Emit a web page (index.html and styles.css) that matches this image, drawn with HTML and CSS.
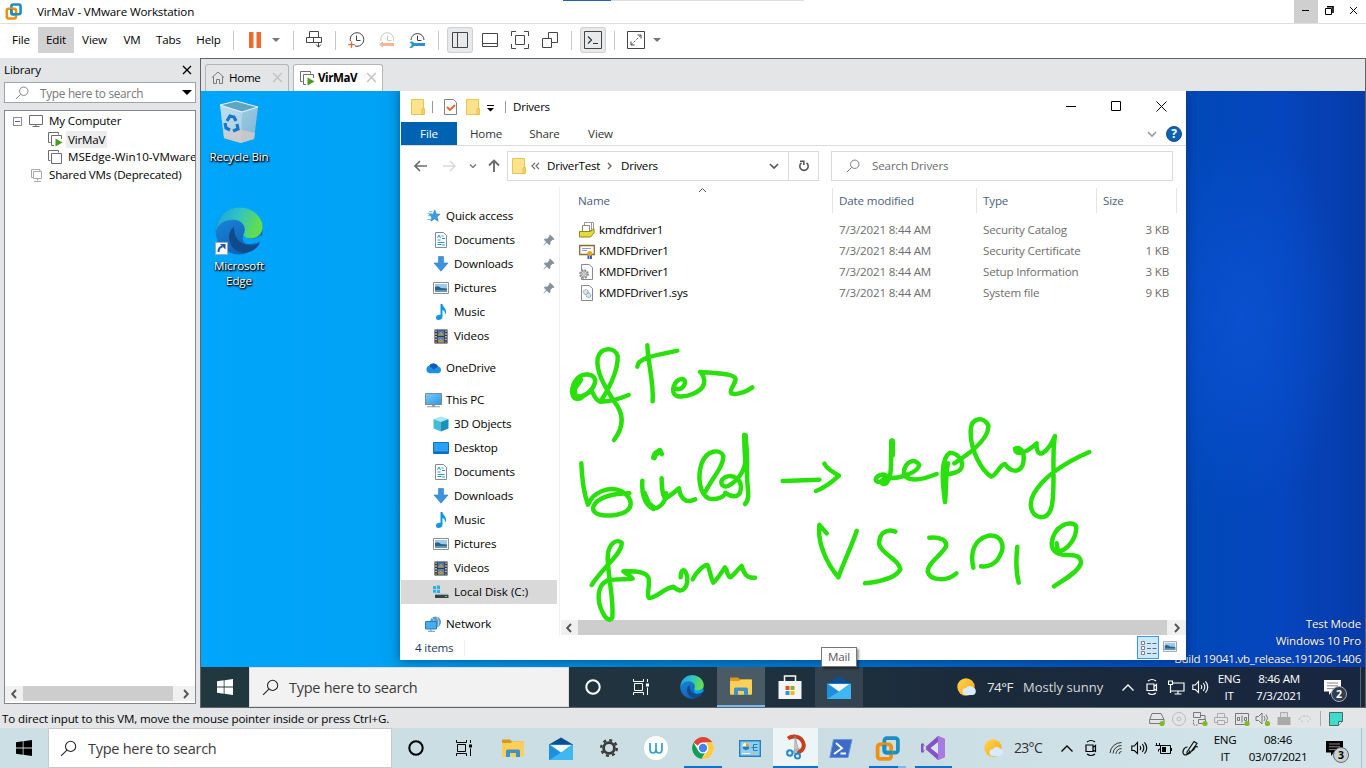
FILE: index.html
```html
<!DOCTYPE html>
<html lang="en">
<head>
<meta charset="utf-8">
<title>VirMaV - VMware Workstation</title>
<link rel="stylesheet" href="styles.css">
</head>
<body>
<svg class="defs" width="0" height="0">
  <defs>
    <linearGradient id="gEdgeA" x1="0" y1="0" x2="1" y2="0.3"><stop offset="0" stop-color="#1b9de2"/><stop offset=".5" stop-color="#2fc3c4"/><stop offset="1" stop-color="#63dd4e"/></linearGradient>
    <linearGradient id="gEdgeB" x1="0" y1="0" x2="0.6" y2="1"><stop offset="0" stop-color="#1b8fdf"/><stop offset="1" stop-color="#0f5db5"/></linearGradient>
    <linearGradient id="gBin" x1="0" y1="0" x2="1" y2="1"><stop offset="0" stop-color="#b9dcee"/><stop offset="1" stop-color="#8fb6cb"/></linearGradient>
    <linearGradient id="gScreen" x1="0" y1="0" x2="1" y2="1"><stop offset="0" stop-color="#7ccbf7"/><stop offset="1" stop-color="#2a97e3"/></linearGradient>
    <linearGradient id="gSun" x1="0" y1="0" x2="1" y2="1"><stop offset="0" stop-color="#ffd84a"/><stop offset="1" stop-color="#f9a01e"/></linearGradient>
  </defs>
  <symbol id="vmware" viewBox="0 0 24 24"><rect x="9" y="2" width="13" height="14" rx="2.5" fill="none" stroke="#1a8fc4" stroke-width="3.6"/><rect x="2.5" y="8" width="13" height="14" rx="2.5" fill="none" stroke="#f0900f" stroke-width="3.6"/><path d="M9 8.5V14q0 2 2 2h6" fill="none" stroke="#1a8fc4" stroke-width="3.6"/></symbol>
  <symbol id="folder" viewBox="0 0 14 16"><path d="M.5.5h12v15H.5z" fill="#ffe28c" stroke="#e8c452"/><path d="M11 10v5.500h2.500V9.500z" fill="#f7d467" stroke="#dbb53e" stroke-width=".7"/></symbol>
  <symbol id="mag" viewBox="0 0 16 16"><circle cx="10" cy="6" r="4.800" fill="none" stroke="currentColor"/><path d="M6.500 9.500L1 15" stroke="currentColor" fill="none"/></symbol>
  <symbol id="vm" viewBox="0 0 16 16"><path d="M3.500 11.500h-2v-10h10v2M4.500 4.500h10v10h-10z" fill="none" stroke="#6c6c6c"/></symbol>
  <symbol id="vmrun" viewBox="0 0 16 16"><path d="M3.500 11.500h-2v-10h10v2M7 14.500H4.500v-10h10V8" fill="none" stroke="#6c6c6c"/><path d="M8.500 7.500l7 4-7 4z" fill="#4a9a1c"/></symbol>
  <symbol id="monitor" viewBox="0 0 16 14"><path d="M1.500 1.500h13v9h-13zM7.800 10.500v2M4.500 12.500h7" fill="none" stroke="#6c6c6c"/></symbol>
  <symbol id="shared" viewBox="0 0 14 14"><path d="M3 9.500H1.500v-8H10V3M3.500 3.500h8v7h-8zM7.500 10.500v2M4 13.500h7" fill="none" stroke="#a8a8a8"/></symbol>
  <symbol id="x" viewBox="0 0 10 10"><path d="M1 1l8 8M9 1L1 9" fill="none" stroke="currentColor" stroke-width="1.300"/></symbol>
  <symbol id="left" viewBox="0 0 8 10"><path d="M6 1L2.200 5 6 9" fill="none" stroke="currentColor" stroke-width="1.900"/></symbol>
  <symbol id="right" viewBox="0 0 8 10"><path d="M2 1l3.800 4L2 9" fill="none" stroke="currentColor" stroke-width="1.900"/></symbol>
  <symbol id="down" viewBox="0 0 10 8"><path d="M1 2l4 4 4-4" fill="none" stroke="currentColor" stroke-width="1.600"/></symbol>
  <symbol id="up" viewBox="0 0 14 9"><path d="M1.500 7.500L7 2l5.500 5.500" fill="none" stroke="currentColor" stroke-width="1.300"/></symbol>
  <symbol id="star" viewBox="0 0 16 16"><path d="M9.500 1l1.700 4.600 4.300.4-3.400 3 1.300 5-4.200-2.700L5 14l1-4.700-3-2.900 4.300-.4z" fill="#3c9be3" stroke="#2179c2" stroke-width=".6"/><path d="M1 5h5M2 7.500h3M1 12h4M3 3h4" stroke="#5bb2ee"/></symbol>
  <symbol id="doc" viewBox="0 0 14 16"><path d="M1.500.5h8l3 3v12h-11z" fill="#fff" stroke="#7f8c92"/><path d="M3.500 6l1.500-3 1.500 3M7.500 4h2M3.500 8h3M8 6.500h3M3.500 10.500h7M3.500 12.500h4M8 13h3" stroke="#2d97c9" fill="none"/></symbol>
  <symbol id="dl" viewBox="0 0 16 16"><path d="M5.500.5h5V7h4.500L8 15.200 1 7h4.500z" fill="#3a93de" stroke="#2c7cc3" stroke-width=".6"/></symbol>
  <symbol id="pic" viewBox="0 0 16 12"><path d="M.5.5h15v11H.5z" fill="#fff" stroke="#909090"/><path d="M2 2h12v8H2z" fill="#9ccbf0"/><path d="M2 5q3-2 6 1l6 .5V10H2z" fill="#2d6484"/><path d="M2 8h12v2H2z" fill="#6296bd"/></symbol>
  <symbol id="music" viewBox="0 0 12 16"><path d="M5.500 0h2c0 3 4 4 3.500 8.500-.2 1-.8 2-1.200 2.300C10.500 7.500 9 6.500 7.500 6v7c0 2-2 3-4 3S.5 14.500 1 13s2.500-2.500 4.500-2z" fill="#1296e8"/></symbol>
  <symbol id="video" viewBox="0 0 14 16"><path d="M0 .5h14v15H0z" fill="#36383e"/><path d="M3.500 1.500h7v6h-7z" fill="#4279c2"/><path d="M3.500 8.500h7v6h-7z" fill="#4c86cf"/><path d="M4 6l3-3 3 3v1H4zM4 12l3-2 3 3v1.500H4z" fill="#b8953c"/><path d="M1.700 1.500v13M12.300 1.500v13" stroke="#eee" stroke-width="1.400" stroke-dasharray="1.500 1.500"/></symbol>
  <symbol id="cloud" viewBox="0 0 18 12"><path d="M5 11.500a4 4 0 0 1-.6-7.800A5.500 5.500 0 0 1 14 4.500a3.600 3.600 0 0 1 .5 7z" fill="#1d8fe0"/><path d="M4.400 3.700A5.500 5.500 0 0 1 14 4.500L9 7.500z" fill="#0b5fb8"/></symbol>
  <symbol id="pc" viewBox="0 0 17 15"><path d="M.5.5h16v11H.5z" fill="url(#gScreen)" stroke="#7b8b95"/><path d="M7 12h3v1.500H7zM2 13.300h13v1H2z" fill="#8fa0aa"/></symbol>
  <symbol id="cube" viewBox="0 0 16 16"><path d="M8 .5l7.500 2.500-7.500 3L.5 3z" fill="#a8e6f1"/><path d="M.5 3L8 6v9.500l-7.500-3z" fill="#45bdd5"/><path d="M15.500 3L8 6v9.500l7.500-3z" fill="#1a91b8"/></symbol>
  <symbol id="desk" viewBox="0 0 16 12"><path d="M.5.5h15v11H.5z" fill="#27a0f5" stroke="#1270bd"/><path d="M1 9.500h14V11H1z" fill="#0d6ab5"/></symbol>
  <symbol id="disk" viewBox="0 0 16 14"><path d="M0 1h3v3H0zM3.800.6H7V4H3.800zM0 4.700h3v3H0zM3.800 4.700H7V8H3.800z" fill="#25b4e4"/><path d="M3 8.500h11l1.500 1.500h-13.500z" fill="#bfc3c6"/><path d="M2 9.800h13.500V13H2z" fill="#3c4043"/><path d="M12 11h2v1h-2z" fill="#51e04d"/></symbol>
  <symbol id="net" viewBox="0 0 17 16"><circle cx="10.500" cy="6" r="5.500" fill="#5f9dc4"/><path d="M7 2q4 3 1 6M12 1q3 4 1 9" stroke="#b5d7ea" fill="none"/><path d="M.5 5.500h11v7.500H.5z" fill="#45aef0" stroke="#2a7cb8"/><path d="M3 15.300h7M6 13v2" stroke="#78909c"/></symbol>
  <symbol id="pin" viewBox="0 0 12 12"><path d="M7 .5L11.500 5l-1 .9-1-.2L7.300 7.900l.2 2.100-1.200 1.200L3.900 8.800.8 11.600.4 11.200 3.200 8.100.8 5.700 2 4.500l2.100.2L6.300 2.500 6.100 1.500z" fill="#84909a"/></symbol>
  <symbol id="start" viewBox="0 0 16 16"><path d="M0 2.300L6.700 1.300V7.600H0zM7.500 1.200L16 0v7.600H7.500zM0 8.400h6.700v6.300L0 13.700zM7.500 8.400H16V16l-8.500-1.200z" fill="currentColor"/></symbol>
  <symbol id="cortana" viewBox="0 0 18 18"><circle cx="9" cy="9" r="6.700" fill="none" stroke="currentColor" stroke-width="2"/></symbol>
  <symbol id="taskview" viewBox="0 0 16 16"><path d="M.5 0v2.500h10V0M1.500 4.500h8v7h-8zM.5 16v-2.500h10V16M14.500 0v3M14.500 8.500V16" fill="none" stroke="currentColor"/><path d="M13 4.500h3v3h-3z" fill="currentColor"/></symbol>
  <symbol id="edge" viewBox="0 0 48 48"><circle cx="24" cy="24" r="23.500" fill="url(#gEdgeB)"/><path d="M1 24C2 9 13 0 25 .5 39 1 48 11 47.500 21c-.5 8-8 11-14 10.500-4-.5-6.500-2-5-4C32 21 28 14.500 21 13 12 11.500 3 16 1 24z" fill="url(#gEdgeA)"/><path d="M19 20c-5 3-6 10-4 16 3 7 10 11 18 9 6-1 10-5 12-9-8 4-17 3-22-3-3-4-4-8-4-13z" fill="#114a8b"/><path class="bite" d="M34 31.500q6 1 12-3.500 2 2 .5 5.500-8 5-16 3-4-2-2-9 1 3 5.500 4z"/></symbol>
  <symbol id="explorer" viewBox="0 0 22 18"><path d="M0 1.500Q0 .5 1 .5h7l2 2h12V6H0z" fill="#d99a1b"/><path d="M0 4h9l1.500-1.500H21q1 0 1 1V17q0 .8-1 .8H1q-1 0-1-1z" fill="#fccf57"/><path d="M4 18v-6q0-1.500 1.500-1.500h11q1.500 0 1.500 1.500v6h-4v-4H8v4z" fill="#3e92c8"/></symbol>
  <symbol id="store" viewBox="0 0 24 24"><path d="M6.500 7V1h11v6" fill="none" stroke="#fff" stroke-width="1.500"/><path d="M.5 6h23v18H.5z" fill="#f4f4f4"/><path d="M7.500 11h4v4h-4z" fill="#e8501f"/><path d="M12.500 11h4v4h-4z" fill="#7db82b"/><path d="M7.500 16h4v4h-4z" fill="#219bd9"/><path d="M12.500 16h4v4h-4z" fill="#f9b912"/></symbol>
  <symbol id="mail" viewBox="0 0 24 23"><path d="M0 7.500L12 .5l12 7V11H0z" fill="#0c4f97"/><path d="M0 7.500V23h24V7.500z" fill="#28a5e8"/><path d="M0 23V8l24 15z" fill="#1d8fdc"/><path d="M24 23V8L0 23z" fill="#3fb8f1"/><path d="M1.500 8h21L12 15.500z" fill="#f5f8fb"/></symbol>
  <symbol id="weather" viewBox="0 0 20 19"><circle cx="9" cy="9" r="8.700" fill="url(#gSun)"/><path d="M9 17a3.500 3.500 0 0 1 0-7 4.500 4.500 0 0 1 7-.5 3.900 3.900 0 0 1 0 7.500z" fill="#d7ebfb"/></symbol>
  <symbol id="meet" viewBox="0 0 16 18"><path d="M4 3q4-3 8 0M4 15q4 3 8 0M3 6h7v6.500H3zM10 8.500l2.500-2v6L10 11" fill="none" stroke="currentColor" stroke-width="1.200"/></symbol>
  <symbol id="lan" viewBox="0 0 17 15"><path d="M5 3h11v8H3M10 11v3M6.500 14h7M.5 1h4v3.500h-4zM2.500 4.500V13" fill="none" stroke="currentColor" stroke-width="1.200"/></symbol>
  <symbol id="speaker" viewBox="0 0 17 14"><path d="M.8 5h2.500L6.500 1.500v11L3.300 9.500H.8zM9 5q1.500 2 0 4M11.300 3q3 4 0 8M13.500 1.300q4.500 5.700 0 11.400" fill="none" stroke="currentColor" stroke-width="1.100"/></symbol>
  <symbol id="note" viewBox="0 0 17 15"><path d="M0 0h17v11.500H8L5 15v-3.500H0z" fill="currentColor"/><path d="M3 3h11M3 5.800h11M3 8.600h7" class="cut"/></symbol>
</svg>

<header class="titlebar">
  <svg class="logo" width="17" height="17"><use href="#vmware"/></svg>
  <span class="wintitle">VirMaV - VMware Workstation</span>
  <div class="notch"></div>
  <div class="winbtns">
    <span class="wb min"><svg width="8" height="10"><path d="M0 4.500h7" stroke="#000"/></svg></span>
    <span class="wb"><svg width="9" height="9"><path d="M.5 2.500h6v6h-6z" fill="none" stroke="#000"/><path d="M2 .8h6V7" fill="none" stroke="#000" stroke-width="1.600"/></svg></span>
    <span class="wb"><svg width="9" height="9"><path d="M1 1l7 7M8 1L1 8" stroke="#000"/></svg></span>
  </div>
</header>

<nav class="menubar">
  <span class="mi m1">File</span><span class="mi m2">Edit</span><span class="mi m3">View</span><span class="mi m4">VM</span><span class="mi m5">Tabs</span><span class="mi m6">Help</span>
  <i class="sep s1"></i>
  <span class="tb"><svg width="12" height="16"><path d="M0 0h4.500v16H0zM7.500 0H12v16H7.500z" fill="#ec6a2c"/></svg></span>
  <i class="caret"></i>
  <i class="sep s2"></i>
  <span class="tb"><svg width="16" height="18"><path d="M3.500.5h9v6h-9zM.5 6.500h7v5h-7zM7.500 6.500h8v5h-8zM12.500 11v5M10 13.500l2.500 2.700 2.500-2.700" fill="none" stroke="#444"/></svg></span>
  <i class="sep s3"></i>
  <span class="tb"><svg width="16" height="16"><circle cx="9" cy="7.500" r="6.800" fill="none" stroke="#444"/><path d="M8.500 3.500v5h4" fill="none" stroke="#444"/><path d="M0 9h7v8H0z" fill="#fff"/><path d="M3.500 9.500V16M.3 12.700h6.500" stroke="#ec6a2c" stroke-width="1.300"/></svg></span>
  <span class="tb g5"><svg width="16" height="16"><path d="M2 9A6.500 6.500 0 1 1 14.500 9M8.500 3.500v5h4" fill="none" stroke="#c8c8c8"/><path d="M0 12.500l4-3V11h11v3H4v1.500z" fill="#f6b593"/></svg></span>
  <span class="tb g4"><svg width="16" height="16"><path d="M2 8A6.500 6.500 0 1 1 15 8M8.500 3.500v5h4" fill="none" stroke="#444"/><path d="M5 11h11v3H5c-1 2-3 2.500-5 1.500l2.500-1.500v-2L.5 10c2-1 4-.5 4.500 1z" fill="#2b92d0"/></svg></span>
  <i class="sep s4"></i>
  <span class="tb on"><svg width="16" height="16"><path d="M.5.5h15v15H.5zM5.500.5v15" fill="none" stroke="#444"/></svg></span>
  <span class="tb g4"><svg width="16" height="16"><path d="M.5 1.500h15v13H.5zM.5 11.500h15" fill="none" stroke="#444"/></svg></span>
  <span class="tb g4"><svg width="18" height="18"><path d="M4.500 4.500h9v9h-9zM.5 5V.5H5M13 .5h4.500V5M17.500 13v4.500H13M5 17.500H.5V13" fill="none" stroke="#444"/></svg></span>
  <span class="tb g4"><svg width="16" height="16"><path d="M.5 6.500h9v9h-9zM6.500 6V.5h9v10H10" fill="none" stroke="#444"/></svg></span>
  <i class="sep s4"></i>
  <span class="tb on"><svg width="18" height="18"><path d="M.5.5h17v17H.5z" fill="none" stroke="#444"/><path d="M4 5.500L7.500 9 4 12.500M9 12.500h5" fill="none" stroke="#333" stroke-width="1.200"/></svg></span>
  <i class="sep s4"></i>
  <span class="tb"><svg width="18" height="18"><path d="M.5.5h17v17H.5z" fill="none" stroke="#444"/><path d="M10.500 4h3.500v3.500M4 10.500V14h3.500" fill="none" stroke="#444"/><path d="M14 4L4 14" stroke="#555" stroke-dasharray="2.500 1.500"/></svg></span>
  <i class="caret"></i>
</nav>

<main class="main">
  <aside class="library">
    <div class="libhead"><span>Library</span><svg width="10" height="10"><use href="#x"/></svg></div>
    <div class="libsearch"><svg width="14" height="14"><use href="#mag"/></svg><span class="ph">Type here to search</span><i class="bigcaret"></i></div>
    <div class="tree">
      <div class="tr r1"><i class="minus"></i><svg width="16" height="14"><use href="#monitor"/></svg><span>My Computer</span></div>
      <div class="tr r2"><svg width="16" height="16"><use href="#vmrun"/></svg><span class="sel">VirMaV</span></div>
      <div class="tr r2"><svg width="16" height="16"><use href="#vm"/></svg><span class="long">MSEdge-Win10-VMware</span></div>
      <div class="tr r3"><svg width="14" height="14"><use href="#shared"/></svg><span class="dep">Shared VMs (Deprecated)</span></div>
      <div class="hbar lib"><svg width="8" height="10"><use href="#left"/></svg><i class="thumb"></i><svg width="8" height="10"><use href="#right"/></svg></div>
    </div>
  </aside>

  <section class="vmpane">
    <div class="tabs">
      <div class="tab home"><svg width="14" height="13"><path d="M1 6.500L7 1l6 5.500M2.500 5.500v7h3V8.500h3v4h3v-7" fill="none" stroke="#7b7b7b"/></svg><span>Home</span><svg class="cx" width="11" height="11"><use href="#x"/></svg></div>
      <div class="tab act"><svg width="16" height="16"><use href="#vmrun"/></svg><span>VirMaV</span><svg class="cx" width="11" height="11"><use href="#x"/></svg></div>
    </div>
    <div class="screen">
      <div class="dicon bin">
        <svg width="40" height="44" viewBox="0 0 40 44"><path d="M1 5L17 1l22 6-4 32-13 4-17-5z" fill="url(#gBin)" opacity=".9"/><path d="M1 5L17 1l22 6-16 5z" fill="#5fa5c4"/><path d="M1 5l22 7-1 31-17-5z" fill="#cfe6f2" opacity=".5"/><path d="M5 34l14-5 17 4-1 6-13 4-17-5z" fill="#d3cbc8" opacity=".8"/><path d="M1 5L17 1l22 6-16 5z" fill="none" stroke="#e9f5fa"/><path d="M8 21l3-5 4 1 2 4M18 24l1 5-5 2M11 30l-4-2-1-5" fill="none" stroke="#1975c5" stroke-width="3.200"/></svg>
        <span>Recycle Bin</span>
      </div>
      <div class="dicon edge">
        <svg width="48" height="48"><use href="#edge"/><path d="M.5 35.500h12v12H.5z" fill="#f6f9fc" stroke="#9ab"/><path d="M3.500 45q0-5 4-5.500" fill="none" stroke="#24549b" stroke-width="2"/><path d="M5 37h5.500v5.500z" fill="#24549b"/></svg>
        <span>Microsoft<br>Edge</span>
      </div>
      <div class="mark"><span class="k1">Test Mode</span><span class="k2">Windows 10 Pro</span><span class="k3">Build 19041.vb_release.191206-1406</span></div>

      <div class="window">
        <div class="wtitle">
          <svg width="14" height="16"><use href="#folder"/></svg><i class="vb v1"></i>
          <svg class="chk" width="13" height="16"><path d="M.5.500h9l3 3v12H.5z" fill="#fff" stroke="#7d8486"/><path d="M3 8l3 3 5-5" fill="none" stroke="#e4622b" stroke-width="1.800"/></svg>
          <svg class="f2" width="14" height="16"><use href="#folder"/></svg>
          <svg class="qat" width="7" height="8"><path d="M0 1.500h7" stroke="#000"/><path d="M0 4h7L3.500 7.500z"/></svg>
          <i class="vb v2"></i><span class="wname">Drivers</span>
          <div class="wctl"><svg width="10" height="10"><path d="M0 5.500h10" stroke="#000"/></svg><svg width="10" height="10"><path d="M.5.500h9v9h-9z" fill="none" stroke="#000"/></svg><svg width="11" height="11"><path d="M.5.500l10 10M10.500.5l-10 10" stroke="#000"/></svg></div>
        </div>
        <div class="ribbon"><span class="file">File</span><span class="rt a">Home</span><span class="rt b">Share</span><span class="rt c">View</span>
          <svg class="rd" width="10" height="8"><use href="#down"/></svg><b class="help">?</b></div>
        <div class="addr">
          <svg class="back" width="13" height="12"><path d="M13 6H1M6 1L1 6l5 5" fill="none" stroke="#6b6b6b" stroke-width="1.700"/></svg>
          <svg class="fwd" width="13" height="12"><path d="M0 6h12M7 1l5 5-5 5" fill="none" stroke="#dadada" stroke-width="1.700"/></svg>
          <svg class="rec" width="8" height="6"><use href="#down"/></svg>
          <svg class="upa" width="12" height="13"><path d="M6 13V1M1 6.500L6 1.500l5 5" fill="none" stroke="#6b6b6b" stroke-width="1.900"/></svg>
          <div class="path"><svg width="14" height="16"><use href="#folder"/></svg><svg class="dbl" width="9" height="8"><path d="M4 .800L1 4l3 3.200M8 .800L5 4l3 3.200" fill="none" stroke="#666" stroke-width="1.200"/></svg><span class="p1">DriverTest</span><svg class="gt" width="6" height="8"><path d="M1 1l3 3-3 3" fill="none" stroke="#666" stroke-width="1.400"/></svg><span class="p2">Drivers</span><svg class="pd" width="10" height="8"><use href="#down"/></svg></div>
          <div class="refresh"><svg width="12" height="12"><path d="M3.500 2.800A4.200 4.200 0 1 0 8.500 2.800M2 1.200h3.800V5" fill="none" stroke="#555" stroke-width="1.600"/></svg></div>
          <div class="wsearch"><svg width="14" height="14"><use href="#mag"/></svg><span>Search Drivers</span></div>
        </div>
        <div class="body">
          <div class="navp">
            <div class="n top"><svg width="14" height="14"><use href="#star"/></svg><span>Quick access</span></div>
            <div class="n"><svg width="16" height="16"><use href="#doc"/></svg><span>Documents</span><svg class="pin" width="12" height="12"><use href="#pin"/></svg></div>
            <div class="n"><svg width="16" height="16"><use href="#dl"/></svg><span>Downloads</span><svg class="pin" width="12" height="12"><use href="#pin"/></svg></div>
            <div class="n"><svg width="16" height="12"><use href="#pic"/></svg><span>Pictures</span><svg class="pin" width="12" height="12"><use href="#pin"/></svg></div>
            <div class="n"><svg width="16" height="16"><use href="#music"/></svg><span>Music</span></div>
            <div class="n"><svg width="16" height="15"><use href="#video"/></svg><span>Videos</span></div>
            <div class="n top gap"><svg width="16" height="12"><use href="#cloud"/></svg><span>OneDrive</span></div>
            <div class="n top gap"><svg width="17" height="15"><use href="#pc"/></svg><span>This PC</span></div>
            <div class="n"><svg width="16" height="16"><use href="#cube"/></svg><span>3D Objects</span></div>
            <div class="n"><svg width="16" height="12"><use href="#desk"/></svg><span>Desktop</span></div>
            <div class="n"><svg width="16" height="16"><use href="#doc"/></svg><span>Documents</span></div>
            <div class="n"><svg width="16" height="16"><use href="#dl"/></svg><span>Downloads</span></div>
            <div class="n"><svg width="16" height="16"><use href="#music"/></svg><span>Music</span></div>
            <div class="n"><svg width="16" height="12"><use href="#pic"/></svg><span>Pictures</span></div>
            <div class="n"><svg width="16" height="15"><use href="#video"/></svg><span>Videos</span></div>
            <div class="n cur"><svg width="16" height="14"><use href="#disk"/></svg><span class="ld">Local Disk (C:)</span></div>
            <div class="n top gap"><svg width="17" height="16"><use href="#net"/></svg><span>Network</span></div>
          </div>
          <div class="files">
            <div class="cols"><span>Name</span><span>Date modified</span><span>Type</span><span>Size</span><svg class="sort" width="9" height="6"><path d="M1 5l3.500-3.500L8 5" fill="none" stroke="#555"/></svg></div>
            <div class="row"><svg width="16" height="16"><path d="M5.500.5h7v8h-7zM8.500.5h6v8" fill="#fff" stroke="#999"/><path d="M3.500 3.500h7v7h-7z" fill="#fff" stroke="#888"/><path d="M.5 9.500h11l3.500-3V11l-3.500 4H.5z" fill="#e6da3c" stroke="#8f871d"/></svg><span>kmdfdriver1</span><span>7/3/2021 8:44 AM</span><span>Security Catalog</span><span class="sz">3 KB</span></div>
            <div class="row"><svg width="16" height="16"><path d="M.7 2.500h14.600v9H.7z" fill="#fff" stroke="#8a6a38" stroke-width="1.300"/><path d="M3 5.500h9M3 7.500h5" stroke="#8ea2c8"/><path d="M8.500 12h2v4h-2zM11 12h2v4h-2z" fill="#2d62b5"/><circle cx="10.800" cy="10.500" r="2.500" fill="#f0a21b"/></svg><span>KMDFDriver1</span><span>7/3/2021 8:44 AM</span><span>Security Certificate</span><span class="sz">1 KB</span></div>
            <div class="row"><svg width="16" height="16"><path d="M2.500.5H10l3.500 3v12h-11z" fill="#fff" stroke="#888"/><circle cx="5" cy="10" r="4" fill="#e2e2e2" stroke="#888" stroke-width="1.700" stroke-dasharray="1.800 1.340"/><circle cx="5" cy="10" r="3" fill="#ddd" stroke="#888" stroke-width=".7"/><circle cx="5" cy="10" r="1.300" fill="#fff" stroke="#888" stroke-width=".7"/></svg><span>KMDFDriver1</span><span>7/3/2021 8:44 AM</span><span>Setup Information</span><span class="sz">3 KB</span></div>
            <div class="row"><svg width="16" height="16"><path d="M2.500.5H10l3.500 3v12h-11z" fill="#fff" stroke="#888"/><circle cx="6.800" cy="7" r="2.500" fill="#d5e4ec" stroke="#8a969e" stroke-dasharray="1.500 .6"/><circle cx="9.500" cy="10.300" r="2.300" fill="#d5e9f2" stroke="#7297ab" stroke-dasharray="1.500 .6"/></svg><span>KMDFDriver1.sys</span><span>7/3/2021 8:44 AM</span><span>System file</span><span class="sz">9 KB</span></div>
            <div class="hbar win"><svg width="8" height="10"><use href="#left"/></svg><i class="thumb"></i><svg width="8" height="10"><use href="#right"/></svg></div>
          </div>
        </div>
        <div class="wstatus"><span>4 items</span><i class="vline"></i>
          <div class="vbtn"><svg width="17" height="14"><path d="M1.500.5h3v3h-3zM1.500 5.500h3v3h-3zM1.500 10.500h3v3h-3z" fill="#fff" stroke="#8a7d78"/><path d="M7 2.500h4M12.500 2.500h4M7 7.500h4M12.500 7.500h4M7 12.500h4M12.500 12.500h4" stroke="#6b6b6b"/></svg></div>
          <svg class="v2b" width="14" height="11"><use href="#pic"/></svg></div>

        <svg class="ink" width="560" height="300" viewBox="560 330 560 300">
          <g transform="translate(560 330) scale(.33333)">
            <path d="M62 148C45 158 35 182 47 200C75 203 104 178 106 150C98 126 60 128 44 156C32 180 34 205 52 207C70 203 85 185 96 184C104 203 112 214 122 214C138 190 176 125 173 78C165 50 122 50 113 85C107 125 135 170 162 214C188 245 196 285 162 330M120 215C150 215 180 206 206 195"/>
            <path class="thick" d="M60 150L42 176L44 200L60 203"/>
            <path d="M262 46C264 100 282 160 278 214M232 110C234 82 290 76 352 62M344 174C365 190 388 150 366 147C340 150 330 190 350 198C380 205 425 185 432 162C436 145 426 130 420 126C470 130 525 130 527 148C525 165 506 180 514 190C530 195 555 188 577 172"/>
            <path d="M64 400C66 450 75 500 84 524C98 486 150 466 185 484C224 508 222 545 170 554C125 562 95 552 100 530C110 502 160 490 208 490M247 452C244 490 255 520 270 530C290 545 318 520 318 490M305 445C305 480 310 505 318 504C335 495 348 482 357 475C360 500 375 524 406 508"/>
            <path class="thick" d="M282 382L286 372L299 363M252 490L264 520L280 534"/>
            <path d="M298 362L306 372M436 485C460 440 490 410 490 378C480 355 440 360 425 400C412 440 418 490 445 505C470 512 495 500 496 488C510 500 538 508 542 480C548 450 520 430 495 442C475 455 485 475 504 468C530 455 555 425 556 390L553 314C562 350 562 390 561 430C560 470 573 505 555 522"/>
            <path class="thick" d="M555 318L558 395"/>
            <path d="M668 453L778 449M793 401C800 416 815 425 837 437C815 457 790 475 768 483"/>
            <path d="M95 765C130 710 188 670 185 638C170 625 144 640 143 682C145 750 162 810 157 862C150 875 138 868 129 850C108 810 112 765 142 752C170 745 200 750 218 746C212 737 200 732 190 724C230 722 260 725 266 745C270 775 258 795 267 804C290 805 310 775 340 770C362 792 382 780 382 745C378 714 362 712 362 742M398 748C408 728 430 705 442 705C450 720 452 745 460 758C475 745 485 725 495 712C505 725 500 740 512 742C525 732 535 715 545 708C552 730 560 747 585 743"/>
          </g>
          <g transform="translate(770 400) scale(.33333)">
            <path d="M350 230C342 216 315 228 318 242C325 252 350 240 340 228M366 122C358 175 372 225 348 250C335 258 325 242 352 232C390 240 445 215 448 195C435 172 405 185 402 215C405 250 455 240 500 222"/>
            <path class="thick" d="M366 124V165"/>
            <path d="M525 306C516 240 512 175 540 158C575 160 590 205 560 216L540 222M534 190C526 220 530 260 525 306M553 190C600 160 658 115 655 76C640 48 603 52 602 92C600 150 635 212 664 230C682 224 690 192 705 192C722 218 748 218 758 195C768 160 752 138 735 146C735 165 762 165 800 130C798 150 805 164 817 160C837 147 845 130 855 108C845 160 855 220 848 300C845 340 830 352 812 352C780 345 775 310 792 280C820 232 880 190 958 156"/>
            <path d="M170 400L148 375C142 430 170 490 205 532C220 490 248 430 260 393M376 395C350 384 325 400 328 435C340 465 388 480 391 508C375 536 330 545 285 550M478 413C510 410 532 420 528 440C510 470 472 490 473 515C480 542 530 546 559 520M610 503C600 460 610 420 655 407C695 402 708 440 688 470C675 495 650 502 633 499M742 440C738 475 736 510 746 548M860 430L864 455C895 450 922 410 918 378C905 360 852 372 845 430C845 460 870 465 900 465C925 466 936 475 932 492C920 520 880 540 852 559"/>
          </g>
        </svg>
      </div>

      <div class="vmtask">
        <div class="st"><svg width="16" height="16"><use href="#start"/></svg></div>
        <div class="ts"><svg width="17" height="17"><use href="#mag"/></svg><span>Type here to search</span></div>
        <div class="ti"><svg width="18" height="18"><use href="#cortana"/></svg></div>
        <div class="ti"><svg width="16" height="16"><use href="#taskview"/></svg></div>
        <div class="ti w52"><svg width="24" height="24"><use href="#edge"/></svg></div>
        <div class="ti hot"><svg width="22" height="18"><use href="#explorer"/></svg></div>
        <div class="ti w50"><svg width="24" height="24"><use href="#store"/></svg></div>
        <div class="ti hov"><svg width="24" height="23"><use href="#mail"/></svg></div>
        <div class="tray">
          <svg width="20" height="19"><use href="#weather"/></svg>
          <span class="deg">74°F</span><span class="sunny">Mostly sunny</span>
          <div class="c24 chev"><svg width="14" height="9"><use href="#up"/></svg></div>
          <div class="c24"><svg width="16" height="18"><use href="#meet"/></svg></div>
          <div class="c24"><svg width="17" height="15"><use href="#lan"/></svg></div>
          <div class="c24"><svg width="17" height="14"><use href="#speaker"/></svg></div>
          <div class="two lang"><span>ENG</span><span>IT</span></div>
          <div class="two clock"><span>8:46 AM</span><span>7/3/2021</span></div>
          <div class="notif"><svg width="17" height="15"><use href="#note"/></svg><b>2</b></div>
        </div>
      </div>
      <div class="tip">Mail</div>
    </div>
  </section>
</main>

<footer class="status"><span class="msg">To direct input to this VM, move the mouse pointer inside or press Ctrl+G.</span>
  <div class="devs">
    <svg width="17" height="16"><path d="M3 2.500h9l3 6v4H.7v-4zM.7 8.500H15" fill="none" stroke="#777"/><circle cx="13" cy="12.500" r="2.600" fill="#7dbb28"/></svg>
    <svg width="17" height="16"><circle cx="8" cy="8" r="6.500" fill="none" stroke="#bbb"/><circle cx="8" cy="8" r="2" fill="none" stroke="#bbb"/></svg>
    <svg width="17" height="16"><path d="M1.500 1.500h7v5h-7zM6.500 8.500h7v4h-7zM8 4.500h5v4" fill="none" stroke="#777"/><path d="M1.500 9v5h5" fill="none" stroke="#777" stroke-dasharray="1.500 1"/><circle cx="13" cy="12.500" r="2.600" fill="#7dbb28"/></svg>
    <svg width="17" height="16"><path d="M4.500 6V2.500h7V6M4 11.500H1.500v-5h13v5H12M4.500 9.500h7v4h-7z" fill="none" stroke="#aaa"/></svg>
    <svg width="17" height="16"><path d="M1.500 2.500h13v11h-13z" fill="none" stroke="#777"/><path d="M3.500 6.500h2v3h-2zM8 4.500v7M10.500 6.500h2v3h-2z" fill="none" stroke="#777"/><circle cx="13" cy="12.500" r="2.600" fill="#7dbb28"/></svg>
    <svg width="17" height="16"><path d="M1 5.500h2.500L7 2v11l-3.500-3.500H1zM9 5q2 2.500 0 5M11 3.500q3 4 0 7" fill="none" stroke="#777"/><circle cx="12.500" cy="12.500" r="2.600" fill="#7dbb28"/></svg>
    <svg width="17" height="16"><path d="M4.500 1.500h7v5h-7z" fill="#ddd" stroke="#aaa"/><path d="M1.500 6h13v8h-13z" fill="#aaa"/></svg>
    <svg width="17" height="16"><path d="M2 9q1-4 6-4t6 4M4 11l2-2M12 11l-2-2" fill="none" stroke="#bbb" stroke-dasharray="2 1"/></svg>
    <i class="dsep"></i>
    <svg class="green" width="14" height="14"><path d="M.5.500h13v9l-4 4h-9z" fill="#3fdccb" stroke="#4a6a68"/><path d="M13.500 9.500h-4v4" fill="#c8f5ee" stroke="#4a6a68"/></svg>
  </div>
</footer>

<div class="hosttask">
  <div class="st"><svg width="16" height="16"><use href="#start"/></svg></div>
  <div class="ts"><svg width="17" height="17"><use href="#mag"/></svg><span>Type here to search</span></div>
  <div class="ti"><svg width="18" height="18"><use href="#cortana"/></svg></div>
  <div class="ti"><svg width="16" height="16"><use href="#taskview"/></svg></div>
  <div class="ti w49"><svg width="22" height="18"><use href="#explorer"/></svg></div>
  <div class="ti"><svg width="24" height="23"><use href="#mail"/></svg></div>
  <div class="ti w47"><svg width="20" height="20" viewBox="-10 -10 20 20"><circle r="5.400" fill="none" stroke="#3b3b3b" stroke-width="2.800"/><circle r="7.800" fill="none" stroke="#3b3b3b" stroke-width="2.400" stroke-dasharray="3 3.126"/></svg></div>
  <div class="ti w47"><svg width="24" height="24"><circle cx="12" cy="12" r="12" fill="#fff"/><path d="M6 7v6q0 4 3 4t3-4V7M12 13q0 4 3 4t3-4V7" fill="none" stroke="#2d9fd0" stroke-width="1.700"/></svg></div>
  <div class="ti w47 u38"><svg width="22" height="22" viewBox="-11 -11 22 22"><circle r="11" fill="#fff"/><path d="M-9.500-5.500A11 11 0 0 1 9.500-5.500H0A5.500 5.500 0 0 0-5-2.300z" fill="#db4437"/><path d="M-9.500-5.500L-4.700 2.700A5.500 5.500 0 0 0 2 5.100L-1.500 10.900A11 11 0 0 1-9.500-5.500z" fill="#129d58"/><path d="M9.500-5.500A11 11 0 0 1-1.500 10.900L4.700 2.800Q6-.5 3-5.500z" fill="#fdcd3f"/><circle r="5.300" fill="#fff"/><circle r="4.200" fill="#4584ee"/></svg></div>
  <div class="ti w47"><svg width="22" height="17"><path d="M.7.700h20.600v15.600H.7z" fill="#8ccff2" stroke="#2a7fb5" stroke-width="1.400"/><circle cx="7" cy="6.500" r="3.500" fill="#fff"/><path d="M7 6.500V3a3.500 3.500 0 0 1 3.500 3.500z" fill="#ec9b23"/><path d="M3.500 6.500a3.500 3.500 0 0 0 7 0z" fill="#277bb8"/><path d="M12.500 7.500h2v-3h4M14.500 7.500h4M14.500 10.500h4M14.500 4.500v6" stroke="#2a7fb5" fill="none"/><path d="M3 13.500h8" stroke="#fff"/><path d="M12 13.500h4" stroke="#e8b93c"/></svg></div>
  <div class="ti w45 sn"><svg width="20" height="24"><path d="M2 3.500C6 .5 12 1 15 4q5 6 1 11-2 2-5 2.500" fill="none" stroke="#c5401d" stroke-width="4"/><path d="M9 1l3.500 14-4 4z" fill="#c8ccd0" stroke="#8a8e92" stroke-width=".6"/><path d="M15 12L6 19l2-4z" fill="#a5abb0"/><circle cx="3.800" cy="18" r="2.700" fill="none" stroke="#1d8ad2" stroke-width="2"/><circle cx="11.500" cy="21" r="2.500" fill="none" stroke="#1d8ad2" stroke-width="2"/></svg></div>
  <div class="ti w46"><svg width="24" height="19"><path d="M4.500.500H23L19 18.500H.8z" fill="#3c6cc8" stroke="#6a94dd"/><path d="M7 4l6 5.200L5 15M11.500 14.500h5.500" fill="none" stroke="#fff" stroke-width="1.900"/></svg></div>
  <div class="ti w46 uvm"><svg width="25" height="25"><use href="#vmware"/></svg></div>
  <div class="ti w46 u37"><svg width="24" height="24"><path d="M17 0l7 3v18l-7 3L4.500 13 2 17l-2-1V8l2-1 2.500 4z" fill="#8552c4"/><path d="M17 6v12L9.500 12z" fill="#d6e9ef"/><path d="M2.500 9v6l3-3z" fill="#d6e9ef"/><path d="M17 0l7 3v18l-7 3z" fill="#a77be0"/></svg></div>
  <div class="tray">
    <svg width="20" height="19"><use href="#weather"/></svg>
    <span class="deg">23°C</span>
    <div class="c24 chev"><svg width="14" height="9"><use href="#up"/></svg></div>
    <div class="c24"><svg width="16" height="18"><use href="#meet"/></svg></div>
    <div class="c25"><svg width="14" height="14"><path d="M1 12A11.500 11.500 0 0 1 12.500 1.500M4 12.500a8.500 8.500 0 0 1 8.500-8M7 12.800a5.500 5.500 0 0 1 5.500-5.300M10 13a2.700 2.700 0 0 1 2.500-2.500" fill="none" stroke="#333"/></svg></div>
    <div class="c23"><svg width="17" height="14"><use href="#speaker"/></svg></div>
    <div class="c24"><svg width="17" height="13"><path d="M5.500 3.500h10v8h-10zM16.500 6v3" fill="none" stroke="#000"/><path d="M7 5h4v5H7z"/><path d="M.5 3.500h5V6Q5.500 7.500 3.500 7.500v2M1.500 1v2.500M4.500 1v2.500" fill="none" stroke="#000"/></svg></div>
    <div class="c30"><svg width="17" height="16"><path d="M5 12L12 1.500l3 2L8 13l-3 1.500zM5.500 7C1 7 0 13 2 14.500s5-1 6-4M10 11q2-1 3.500-4.500L16 7" fill="none" stroke="#111" stroke-width="1.200"/></svg></div>
    <div class="two lang"><span>ENG</span><span>IT</span></div>
    <div class="two clock"><span>08:46</span><span>03/07/2021</span></div>
    <div class="notif"><svg width="17" height="15"><use href="#note"/></svg><b>3</b></div>
  </div>
</div>
</body>
</html>
```
FILE: styles.css
```css
* { box-sizing: border-box; }
body { margin: 0; width: 1366px; height: 768px; overflow: hidden; display: flex; flex-direction: column; font-family: "Open Sans", "Noto Sans", sans-serif; font-size: 11.6px; letter-spacing: -0.14px; color: #000; line-height: 16px; white-space: nowrap; background: #fff; }
svg, i { flex: none; display: block; overflow: visible; }
svg.defs { position: absolute; }
.bite { fill: #00a4f8; }
.vmtask .bite { fill: #20333f; }

.titlebar { height: 24px; display: flex; align-items: center; border-bottom: 1px solid #dfdfdf; background: #fff; padding-left: 5px; }
.titlebar .wintitle { margin-left: 15px; width: 511px; }
.notch { align-self: flex-start; width: 241px; height: 1px; margin-left: 15px; background: linear-gradient(90deg, #1f66ad 48px, #ddd 48px); }
.winbtns { margin-left: auto; display: flex; height: 23px; padding-right: 1px; }
.wb { width: 24px; display: flex; align-items: center; justify-content: center; padding-bottom: 2px; }
.wb.min { background: #cfcfcf; margin-right: -1px; }

.menubar { height: 34px; display: flex; align-items: center; background: #fff; padding: 0 0 2px 4px; }
.mi { height: 26px; line-height: 26px; text-align: center; flex: none; }
.m1 { width: 34px; } .m2 { width: 36px; background: #d1d1d1; } .m3 { width: 41px; } .m4 { width: 34px; } .m5 { width: 39px; } .m6 { width: 41px; }
.sep { width: 1px; height: 19px; background: #c8c8c8; margin: 0 8px; }
.s1 { margin-left: 4px; } .s2 { margin: 0 7px 0 13px; } .s3 { margin-right: 7px; }
.tb { width: 26px; height: 26px; display: flex; align-items: center; justify-content: center; flex: none; }
.tb.on { background: #e8e9eb; border: 1px solid #cfcfcf; border-radius: 3px; }
.g5 { margin-left: 5px; } .g4 { margin-left: 4px; }
.caret { margin-left: 4px; border: 4px solid transparent; border-top-color: #777; border-bottom: 0; }

.main { flex: 1; display: flex; min-height: 0; background: #e3e5e7; }
.library { width: 200px; flex: none; padding: 0 4px; display: flex; flex-direction: column; }
.libhead { height: 24px; display: flex; align-items: center; justify-content: space-between; padding-right: 4px; }
.libsearch { height: 21px; width: 192px; background: #fff; border: 1px solid #a0a3a8; display: flex; align-items: center; padding: 0 3px 0 10px; color: #777; }
.libsearch .ph { margin-left: 11px; flex: 1; letter-spacing: -.28px; font-size: 11.8px; }
.bigcaret { border: 5px solid transparent; border-top-color: #000; border-bottom: 0; }
.tree { margin: 7px 0 4px; flex: 1; width: 192px; background: #fff; border: 1px solid #828790; padding-top: 1px; display: flex; flex-direction: column; overflow: hidden; }
.tr { height: 18px; display: flex; align-items: center; flex: none; }
.r1 { padding-left: 8px; } .r1 svg { margin-left: 6px; } .r1 span { margin-left: 5px; }
.r2 { padding-left: 42px; } .r2 span { padding: 0 2px; margin-left: 3px; }
.r3 { padding-left: 25px; } .r3 span { margin-left: 5px; }
.r2 .sel { background: #ececec; line-height: 17px; letter-spacing: -.2px; }
.dep { letter-spacing: -.2px; }
.long { letter-spacing: 0; }
.minus { width: 9px; height: 9px; border: 1px solid #8c8c8c; background: linear-gradient(#47669c, #47669c) center / 5px 1px no-repeat #fff; }
.hbar { display: flex; align-items: center; justify-content: space-between; height: 15px; background: #f0f0f0; color: #555; flex: none; }
.hbar .thumb { height: 100%; background: #cdcdcd; flex: 1; }
.hbar.lib { margin-top: auto; margin-bottom: 2px; padding: 0 5px; }
.hbar.lib .thumb { margin: 0 9px 0 5px; }

.vmpane { flex: 1; border: 1px solid #606367; display: flex; flex-direction: column; min-width: 0; }
.tabs { height: 32px; display: flex; align-items: flex-end; padding-left: 4px; gap: 4px; }
.tab { height: 27px; border: 1px solid #b3b5b8; border-bottom: 0; border-radius: 3px 3px 0 0; display: flex; align-items: center; padding-left: 5px; padding-bottom: 1px; }
.tab .cx { color: #c2c2c2; }
.home { width: 84px; } .home span { margin-left: 4px; width: 43px; letter-spacing: -.3px; }
.act { width: 90px; background: #fff; font-weight: 700; } .act span { margin-left: 3px; width: 48px; letter-spacing: -.45px; }

.screen { flex: 1; position: relative; overflow: hidden; background: radial-gradient(ellipse 110px 200px at 1040px 230px, #0a50cf, rgba(6,70,190,0)), linear-gradient(90deg, #00a6fb 0, #00a2f5 180px, #0096e4 210px, #0078c8 560px, #0048b8 985px, #0545bd 1080px, #063ba8 1164px); }
.dicon { position: absolute; width: 76px; display: flex; flex-direction: column; align-items: center; text-align: center; color: #fff; text-shadow: 1px 1px 2px #000, 0 1px 2px #023, 1px 1px 1px #012; line-height: 15px; }
.bin { left: 0; top: 9px; } .bin span { margin-top: 5px; }
.dicon.edge { left: 0; top: 116px; } .dicon.edge span { margin-top: 3px; }
.mark { position: absolute; right: 4px; top: 525px; display: flex; flex-direction: column; align-items: flex-end; color: #fff; text-shadow: 0 0 1px #012; }
.k1 { height: 17px; } .k2 { height: 17px; } .k3 { letter-spacing: -.3px; padding-top: 1px; }

.window { position: absolute; left: 199px; top: 0; width: 786px; height: 569px; background: #fff; box-shadow: 0 0 9px rgba(0,20,60,.45); display: flex; flex-direction: column; padding-left: 1px; }
.wtitle { height: 31px; display: flex; align-items: center; padding-left: 10px; flex: none; }
.vb { width: 1px; height: 12px; background: #999; }
.v1 { margin: 0 11px 0 7px; } .chk { margin-right: 9px; } .qat { margin: 2px 11px 0 7px; } .wname { margin-left: 7px; letter-spacing: -.25px; }
.wctl { margin-left: auto; display: flex; gap: 35px; padding-right: 19px; }
.ribbon { height: 24px; display: flex; border-bottom: 1px solid #dadbdc; flex: none; color: #333; line-height: 23px; align-items: center; }
.file { width: 56px; height: 23px; background: #0063b1; color: #fff; text-align: center; }
.rt { text-align: center; } .rt.a { width: 58px; } .rt.b { width: 59px; } .rt.c { width: 53px; }
.rd { margin-left: auto; color: #999; margin-right: 9px; }
.help { width: 16px; height: 16px; border-radius: 50%; background: #0a62b5; border: 1px solid #164f86; color: #fff; margin-right: 4px; line-height: 14px; text-align: center; font-size: 12px; }
.addr { display: flex; align-items: center; height: 41px; flex: none; color: #6b6b6b; padding: 0 0 2px 13px; }
.fwd { margin-left: 16px; } .rec { margin-left: 13px; } .upa { margin-left: 11px; }
.path { margin-left: 7px; width: 282px; height: 30px; border: 1px solid #d9d9d9; display: flex; align-items: center; padding-left: 4px; color: #000; letter-spacing: -.25px; }
.dbl { margin-left: 5px; } .p1 { margin-left: 7px; width: 54px; } .gt { margin-left: 6px; } .p2 { margin-left: 8px; } .pd { margin-left: auto; margin-right: 9px; color: #555; }
.refresh { width: 30px; height: 30px; border: 1px solid #d9d9d9; border-left: 0; display: flex; align-items: center; justify-content: center; }
.wsearch { margin-left: 12px; width: 342px; height: 30px; border: 1px solid #d9d9d9; display: flex; align-items: center; padding-left: 14px; letter-spacing: -.14px; } .wsearch span { margin-left: 12px; }
.body { flex: 1; display: flex; min-height: 0; }
.navp { width: 159px; border-right: 1px solid #f0f0f0; padding-top: 17px; }
.n { height: 24px; display: flex; align-items: center; padding-left: 32px; width: 156px; }
.n.top { padding-left: 24px; } .n.gap { margin-top: 8px; }
.n.top svg { width: 17px; }
.n span { margin-left: 5px; } .n.top span { margin-left: 4px; }
.n .ld { letter-spacing: 0; }
.n .pin { margin-left: auto; margin-right: 2px; }
.n.cur { background: #d9d9d9; }
.files { flex: 1; display: flex; flex-direction: column; position: relative; }
.cols { display: grid; grid-template-columns: 255px 144px 120px 80px; height: 24px; margin: 1px 0 7px 18px; line-height: 25px; color: #4c607a; }
.cols span { border-right: 1px solid #e5e5e5; padding-left: 6px; } .cols span:first-child { padding-left: 0; }
.sort { position: absolute; left: 138px; top: 0; }
.row { display: grid; grid-template-columns: 20px 240px 144px 120px 66px; align-items: center; height: 21px; padding-left: 19px; color: #6d6d6d; letter-spacing: -.18px; }
.row span:nth-of-type(1) { color: #000; } .sz { text-align: right; }
.hbar.win { margin-top: auto; margin-bottom: 1px; margin-left: 1px; padding: 0 5px 0 4px; }
.hbar.win .thumb { margin: 0 6px 0 5px; }
.wstatus { height: 24px; display: flex; align-items: center; padding-left: 14px; color: #1e395b; flex: none; }
.vline { width: 1px; height: 16px; background: #eee; margin-left: 10px; }
.vbtn { margin-left: auto; width: 22px; height: 23px; background: #cce8ff; border: 1px solid #3a9bdc; display: flex; align-items: center; justify-content: center; align-self: flex-start; } .v2b { margin: 0 9px 3px 4px; }
.ink { position: absolute; left: 160px; top: 239px; }
.ink path { fill: none; stroke: #2ae00c; stroke-width: 13.5; stroke-linecap: round; stroke-linejoin: round; }
.ink path.thick { stroke-width: 18; }

.vmtask { position: absolute; left: 0; right: 0; bottom: 0; height: 40px; display: flex; color: #fff; background: linear-gradient(90deg, #213840 0, #20333f 500px, #1b2a3b 800px, #182640 1164px); }
.hosttask { height: 40px; flex: none; display: flex; color: #000; background: linear-gradient(90deg, #cbdfe4, #cadde2 60%, #d3e5ea); }
.st { width: 48px; display: flex; align-items: center; justify-content: center; }
.ts { display: flex; align-items: center; color: #3a3a3a; font-size: 14.5px; letter-spacing: -.26px; padding-left: 12px; }
.ts svg { color: #222; } .ts span { margin: 1px 0 0 11px; }
.vmtask .ts { width: 320px; background: #f2f2f2; border: 1px solid #dcdcdc; }
.vmtask .ts span { margin-left: 10px; }
.hosttask .ts { width: 344px; background: #fff; border: 1px solid #c9c9c9; padding-left: 11px; }
.ti { width: 48px; display: flex; align-items: center; justify-content: center; flex: none; position: relative; }
.w52 { width: 52px; padding-left: 2px; } .w50 { width: 50px; padding-right: 1px; } .w49 { width: 49px; } .w47 { width: 47px; } .w46 { width: 46px; } .w45 { width: 45px; }
.hot { background: #4b5b65; border-bottom: 2px solid #76b9ed; } .hov { background: #33434f; }
.sn { background: #edf5f7; border-bottom: 2px solid #0a72cf; }
.u38 { background: linear-gradient(#0a72cf, #0a72cf) center bottom / 38px 2px no-repeat; } .u37 { background: linear-gradient(#0a72cf, #0a72cf) center bottom / 37px 2px no-repeat; }
.uvm { background: linear-gradient(90deg, #0a72cf 29px, #7fb8e4 29px) center bottom / 37px 2px no-repeat; }
.tray { display: flex; align-items: center; flex: 1; }
.vmtask .tray { margin: 0 4px 0 94px; border-right: 1px solid #566; }
.hosttask .tray { margin: 0 4px 0 28px; border-right: 1px solid #b0c0c4; }
.deg { font-size: 14px; margin-left: 10px; width: 32px; letter-spacing: -.7px; color: #333; }
.vmtask .deg { width: 29px; color: #e8e8e8; font-size: 13.5px; letter-spacing: -.6px; }
.sunny { margin-left: 7px; width: 84px; font-size: 13px; color: #d8d8d8; letter-spacing: 0; }
.tray .c24, .tray .c25, .tray .c23, .tray .c30 { width: 24px; display: flex; justify-content: center; flex: none; } .tray .c25 { width: 25px; } .tray .c23 { width: 23px; } .tray .c30 { width: 31px; }
.chev { margin-left: 9px; }
.two { display: flex; flex-direction: column; text-align: center; line-height: 17px; flex: none; } .two.lang { width: 38px; letter-spacing: -.4px; } .clock { width: 66px; letter-spacing: -.3px; }
.hosttask .two { margin-right: 1px; }
.vmtask .lang { width: 34px; }
.notif { position: relative; margin-left: 14px; }
.vmtask .notif { margin-left: 12px; }
.notif b { position: absolute; left: 7px; top: 6px; width: 16px; height: 16px; border-radius: 50%; background: #c9d0d3; border: 1px solid #666; font-size: 10.5px; line-height: 14px; text-align: center; letter-spacing: 0; }
.vmtask .notif b { background: #2f3d4c; border-color: #aab; }
.cut { fill: none; stroke: #888; stroke-width: 1; }
.tip { position: absolute; left: 620px; top: 556px; width: 36px; height: 20px; background: #fff; border: 1px solid #767676; box-shadow: 2px 2px 2px rgba(0,0,0,.4); color: #575757; text-align: center; line-height: 18px; }

.status { height: 20px; flex: none; display: flex; align-items: center; background: #e3e5e7; padding: 1px 0 0 2px; }
.msg { flex: 1; }
.devs { display: flex; align-items: center; gap: 4px; padding-right: 23px; }
.devs svg:first-child { margin-right: 1px; }
.devs svg:nth-of-type(n+2):nth-of-type(-n+8) { margin-right: 0; }
.dsep { width: 1px; height: 15px; background: #aaa; margin: 0 4px 0 2px; }
```
